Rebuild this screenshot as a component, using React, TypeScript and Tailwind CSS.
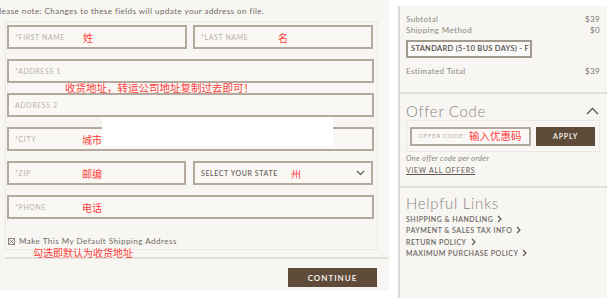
import React from 'react';

const beige = 'bg-[#f7f6f2]';

function Field({
  placeholder,
  label,
  labelOffset,
  className = '',
  select = false,
}: {
  placeholder: string;
  label?: string;
  labelOffset: string;
  className?: string;
  select?: boolean;
}) {
  return (
    <div
      className={`h-[24px] border-2 border-[#b3a99c] bg-[#f9f8f5] flex items-center pl-[6px] pr-[6px] ${className}`}
    >
      <span
        className={`${labelOffset} shrink-0 text-[7px] tracking-[0.6px] ${
          select ? 'text-[#6c6660] font-semibold' : 'text-[#bab2a7]'
        }`}
      >
        {placeholder}
      </span>
      {label && (
        <span className="text-[10px] leading-none pt-[2px] text-[#ff3c3c] font-['Noto_Sans_CJK_SC',sans-serif]">
          {label}
        </span>
      )}
      {select && (
        <svg className="ml-auto" width="9" height="6" viewBox="0 0 9 6">
          <path d="M1 1l3.5 3.5L8 1" fill="none" stroke="#5d5751" strokeWidth="1.2" />
        </svg>
      )}
    </div>
  );
}

function Row({ left, right }: { left: string; right: string }) {
  return (
    <div className="flex justify-between text-[8px] leading-[11px] tracking-[0.4px] text-[#8c867f]">
      <span>{left}</span>
      <span className="text-[#7b756f]">{right}</span>
    </div>
  );
}

export default function App() {
  const links = [
    'SHIPPING & HANDLING',
    'PAYMENT & SALES TAX INFO',
    'RETURN POLICY',
    'MAXIMUM PURCHASE POLICY',
  ];

  return (
    <div className="relative w-[611px] h-[298px] bg-white overflow-hidden font-['Lato','Noto_Sans_CJK_SC',sans-serif]">
      <div className="flex items-start">
        {/* checkout form */}
        <div className={`w-[389px] h-[290px] ${beige} flex flex-col`}>
          <p className="-ml-[6px] pt-[5px] h-[21px] text-[8px] leading-[12px] tracking-[0.45px] text-[#6f6a64] whitespace-nowrap">
            Please note: Changes to these fields will update your address on file.
          </p>
          <div className="ml-[5px] w-[373px] border border-[#ece9e3] pt-[3px] pl-[1px] pr-[3px] pb-[3px] flex flex-col gap-[10px]">
            <div className="flex gap-[6px]">
              <Field placeholder="*FIRST NAME" label="姓" labelOffset="w-[68px]" className="w-[180px]" />
              <Field placeholder="*LAST NAME" label="名" labelOffset="w-[77px]" className="w-[180px]" />
            </div>
            <Field placeholder="*ADDRESS 1" labelOffset="w-[68px]" />
            <Field placeholder="ADDRESS 2" labelOffset="w-[68px]" />
            <Field placeholder="*CITY" label="城市" labelOffset="w-[67px]" />
            <div className="flex gap-[7px]">
              <Field placeholder="*ZIP" label="邮编" labelOffset="w-[67px]" className="w-[179px]" />
              <Field
                placeholder="SELECT YOUR STATE"
                label="州"
                labelOffset="w-[90px]"
                className="w-[180px]"
                select
              />
            </div>
            <Field placeholder="*PHONE" label="电话" labelOffset="w-[67px]" />
            <label className="mt-[7px] h-[10px] flex items-center gap-[4px] text-[8px] tracking-[0.5px] text-[#6f6a64]">
              <span className="ml-[1px] w-[7px] h-[7px] border border-[#8c867f] flex items-center justify-center">
                <svg width="5" height="5" viewBox="0 0 5 5">
                  <path d="M0.5 0.5l4 4M4.5 0.5l-4 4" stroke="#6f6a64" strokeWidth="0.8" />
                </svg>
              </span>
              Make This My Default Shipping Address
            </label>
          </div>
          <div className="ml-[5px] mt-[7px] w-[384px] h-[2px] bg-[#e4e1dc]" />
          <div className="mt-[9px] ml-[288px] w-[89px] h-[19px] bg-[#5e4b3a] flex items-center justify-center text-[8px] font-bold tracking-[1px] text-[#f1ece6]">
            CONTINUE
          </div>
        </div>

        {/* order summary */}
        <div className="ml-[9px] mt-[6px] w-[209px] h-[292px] bg-[#f7f6f3] border-l-2 border-[#dcd8d2]">
          <div className="pt-[8px] pl-[6px] pr-[7px] pb-[15px] border-b-2 border-[#e1ddd7]">
            <Row left="Subtotal" right="$39" />
            <Row left="Shipping Method" right="$0" />
            <div className="mt-[4px] w-[126px] h-[18px] border-2 border-[#a39a8f] bg-[#faf9f7] flex items-center pl-[3px] pr-[3px] overflow-hidden">
              <span className="text-[7.5px] font-semibold tracking-[0.3px] text-[#4e4944] whitespace-nowrap">
                STANDARD (5-10 BUS DAYS) - F
              </span>
              <svg className="ml-auto shrink-0" width="8" height="6" viewBox="0 0 8 6">
                <path d="M1 1l3 3.5L7 1" fill="none" stroke="#4e4944" strokeWidth="1.2" />
              </svg>
            </div>
            <div className="mt-[8px]">
              <Row left="Estimated Total" right="$39" />
            </div>
          </div>

          <div className="pl-[6px] pr-[7px] pb-[10px] border-b-2 border-[#e1ddd7]">
            <div className="pt-[8px] flex items-center justify-between h-[26px]">
              <span className="text-[15px] leading-[18px] font-light tracking-[0.7px] text-[#8a847e]">
                Offer Code
              </span>
              <svg className="mr-[1px]" width="13" height="8" viewBox="0 0 13 8">
                <path d="M1 7l5.5-5.5L12 7" fill="none" stroke="#5a544e" strokeWidth="1.3" />
              </svg>
            </div>
            <div className="border border-[#ebe8e3] h-[32px] pl-[3px] pr-[2px] flex items-center gap-[5px]">
              <div className="w-[121px] h-[19px] border-2 border-[#b3a99c] bg-[#faf9f7] flex items-center pl-[6px]">
                <span className="w-[51px] shrink-0 text-[6.5px] tracking-[0.5px] text-[#bab2a7]">OFFER CODE:</span>
                <span className="text-[10.5px] leading-none text-[#ff3c3c] font-['Noto_Sans_CJK_SC',sans-serif]">
                  输入优惠码
                </span>
              </div>
              <div className="w-[59px] h-[19px] bg-[#5e4b3a] flex items-center justify-center text-[7px] font-bold tracking-[0.8px] text-[#eee8e1]">
                APPLY
              </div>
            </div>
            <p className="mt-[1px] text-[7.5px] leading-[11px] italic tracking-[0.3px] text-[#8c867f]">
              One offer code per order
            </p>
            <p className="mt-[1px] text-[7px] leading-[11px] tracking-[0.7px] text-[#5e5852] underline underline-offset-[1px]">
              VIEW ALL OFFERS
            </p>
          </div>

          <div className="pl-[6px] pt-[6px]">
            <h3 className="text-[15px] leading-[18px] font-light tracking-[0.7px] text-[#8a847e]">Helpful Links</h3>
            <ul className="mt-[1px]">
              {links.map((l) => (
                <li
                  key={l}
                  className="h-[11.5px] flex items-center gap-[4px] text-[7px] font-semibold tracking-[0.5px] text-[#6c6660]"
                >
                  {l}
                  <svg width="5" height="8" viewBox="0 0 5 8">
                    <path d="M1 1l3 3-3 3" fill="none" stroke="#5a544e" strokeWidth="1.1" />
                  </svg>
                </li>
              ))}
            </ul>
          </div>
        </div>
      </div>

      {/* annotations laid over the screenshot */}
      <span className="absolute left-[65px] top-[82px] text-[10.5px] leading-[12px] text-[#ff3c3c] whitespace-nowrap font-['Noto_Sans_CJK_SC',sans-serif]">
        收货地址，转运公司地址复制过去即可！
      </span>
      <span className="absolute left-[33px] top-[247px] text-[10px] leading-[12px] text-[#ff3c3c] whitespace-nowrap font-['Noto_Sans_CJK_SC',sans-serif]">
        勾选即默认为收货地址
      </span>
      <div className="absolute left-[102px] top-[117px] w-[231px] h-[29px] bg-white" />
    </div>
  );
}
